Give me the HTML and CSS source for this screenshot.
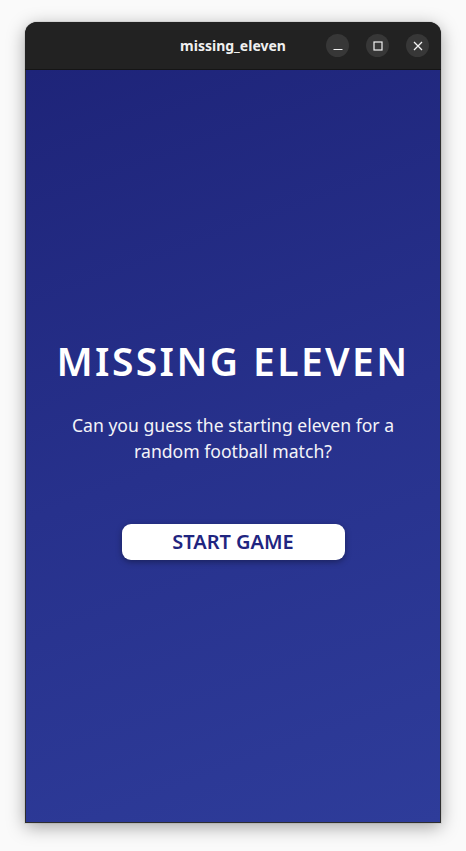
FILE: index.html
```html
<!DOCTYPE html>
<html>
<head>
<meta charset="utf-8">
<link rel="stylesheet" href="styles.css">
</head>
<body>
<div class="desktop">
  <div class="window">
    <div class="titlebar">
      <span class="title">missing_eleven</span>
      <div class="controls">
        <span class="ctl"><svg width="10" height="10" viewBox="0 0 10 10"><path d="M0.5 8.5H9.5" stroke="#f2f2f2" stroke-width="1.2"/></svg></span>
        <span class="ctl"><svg width="10" height="10" viewBox="0 0 10 10"><rect x="1" y="1" width="8" height="8" fill="none" stroke="#f2f2f2" stroke-width="1.2"/></svg></span>
        <span class="ctl"><svg width="10" height="10" viewBox="0 0 10 10"><path d="M1 1L9 9M9 1L1 9" stroke="#f2f2f2" stroke-width="1.3"/></svg></span>
      </div>
    </div>
    <div class="content">
      <h1 class="heading">MISSING ELEVEN</h1>
      <p class="sub">Can you guess the starting eleven for a random football match?</p>
      <button class="start">START GAME</button>
    </div>
  </div>
</div>
</body>
</html>
```
FILE: styles.css
```css
html, body {
  margin: 0;
  padding: 0;
  background: #fafafa;
}
.desktop {
  width: 466px;
  height: 851px;
  padding: 22px 25px 0 25px;
  box-sizing: border-box;
}
.window {
  width: 416px;
  height: 801px;
  border-radius: 12px 12px 0 0;
  overflow: hidden;
  display: flex;
  flex-direction: column;
  box-shadow: 0 4px 18px rgba(0,0,0,0.35), 0 0 0 1px rgba(0,0,0,0.06);
  background: #222;
}
.titlebar {
  height: 47px;
  flex: none;
  background: #222222;
  position: relative;
  display: flex;
  align-items: center;
  justify-content: center;
  border-bottom: 1px solid #151515;
}
.title {
  color: #f0f0f0;
  font-family: "Noto Sans", sans-serif;
  font-weight: 700;
  font-size: 14px;
  margin-top: -1px;
}
.controls {
  position: absolute;
  right: 12px;
  top: 12px;
  display: flex;
  gap: 17px;
}
.ctl {
  width: 23px;
  height: 23px;
  border-radius: 50%;
  background: #373737;
  display: flex;
  align-items: center;
  justify-content: center;
}
.content {
  flex: 1;
  background: linear-gradient(160deg, #1e2479 0%, #27318c 50%, #2e3c9a 100%);
  border: 1px solid #2e2e2e;
  border-top: none;
  display: flex;
  flex-direction: column;
  align-items: center;
  justify-content: center;
  padding-top: 4px;
  box-sizing: border-box;
}
.heading {
  margin: 0;
  color: #ffffff;
  font-family: "Noto Sans", sans-serif;
  font-weight: 600;
  font-size: 39px;
  letter-spacing: 2.4px;
  line-height: 48px;
}
.sub {
  margin: 27px 0 0 0;
  width: 350px;
  text-align: center;
  color: #f4f4f8;
  font-family: "Noto Sans", sans-serif;
  font-size: 17.6px;
  line-height: 26px;
}
.start {
  margin-top: 60px;
  width: 223px;
  height: 36px;
  border: none;
  border-radius: 9px;
  background: #ffffff;
  color: #1f2580;
  font-family: "Noto Sans", sans-serif;
  font-weight: 600;
  font-size: 20px;
  box-shadow: 0 2px 6px rgba(0,0,0,0.35);
  padding: 0;
}
```
